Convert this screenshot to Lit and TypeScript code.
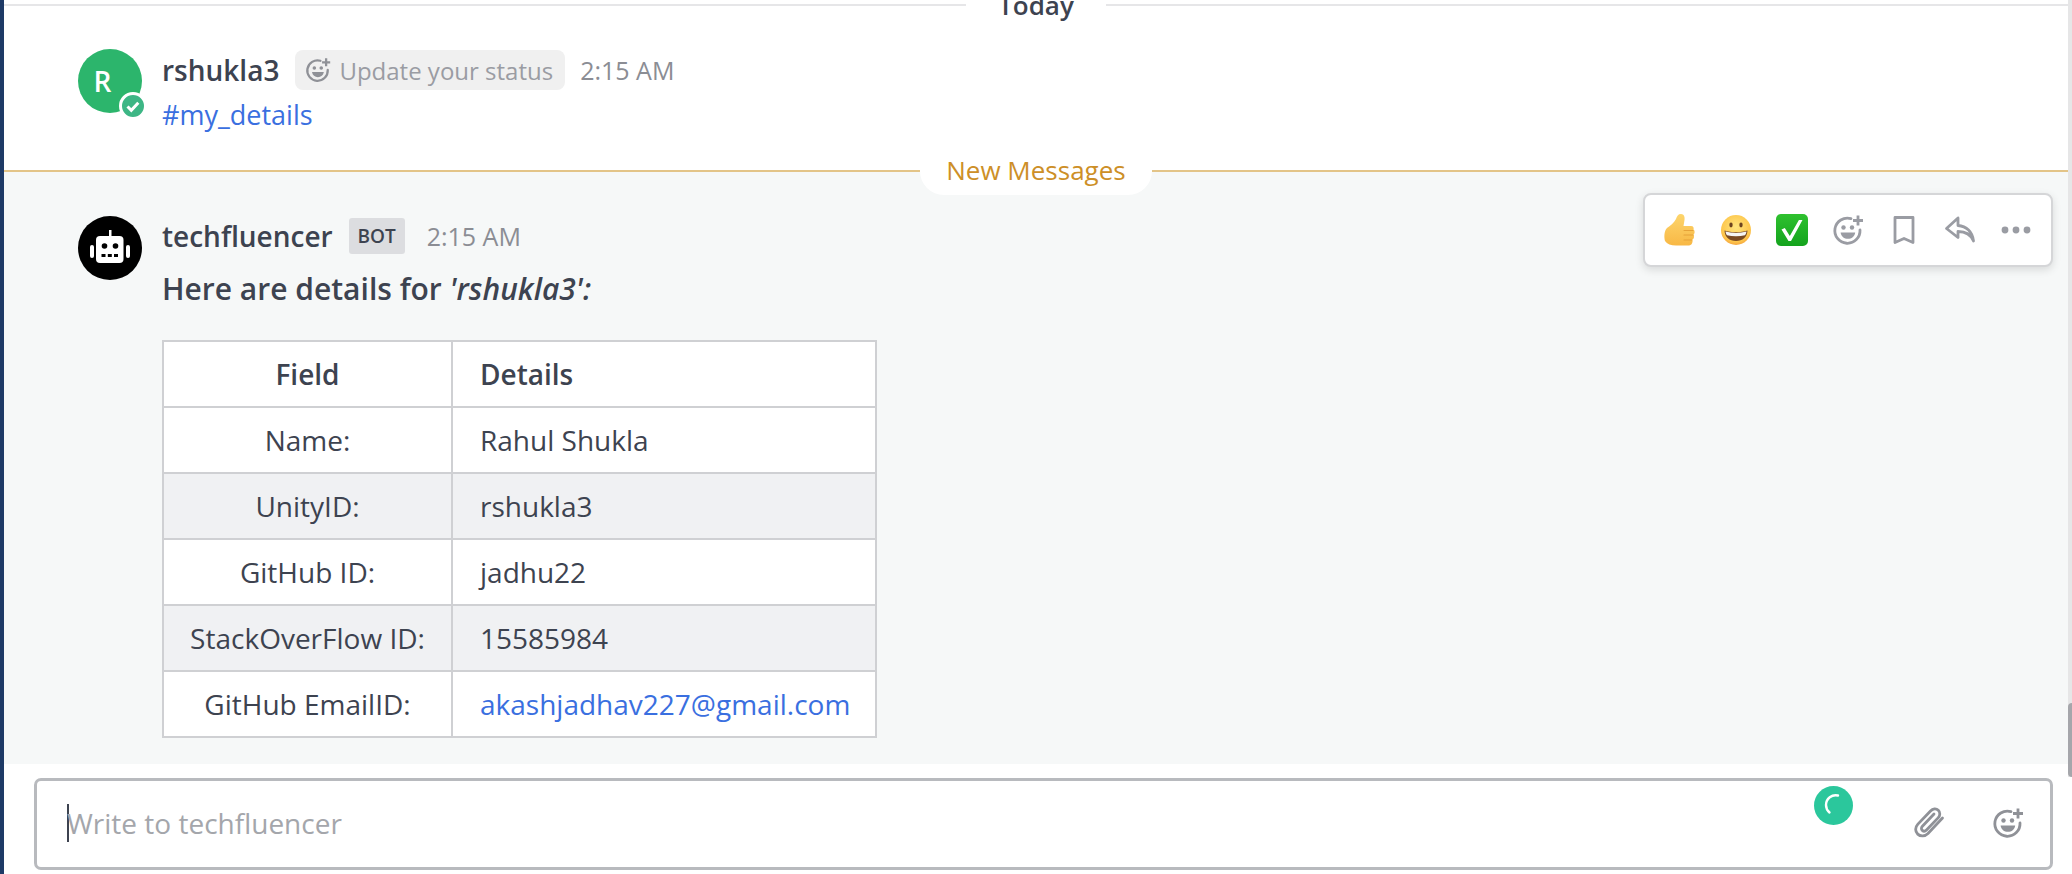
import {LitElement, html, css, svg} from 'lit';
import {customElement} from 'lit/decorators.js';

const rows = [
  ['Name:', 'Rahul Shukla'],
  ['UnityID:', 'rshukla3'],
  ['GitHub ID:', 'jadhu22'],
  ['StackOverFlow ID:', '15585984'],
  ['GitHub EmailID:', 'akashjadhav227@gmail.com'],
];

const smilePlus = (color: string) => html`<svg class="ico" viewBox="0 0 32 32" fill="none">
  <path d="M19 4.600A12.600 12.600 0 1 0 28 16" stroke=${color} stroke-width="2.800" stroke-linecap="round"/>
  <circle cx="11.500" cy="13.500" r="2.200" fill=${color}/>
  <circle cx="20" cy="13.500" r="2.200" fill=${color}/>
  <path d="M8.600 18.400h14.600c-.6 4-3.600 6.400-7.300 6.400s-6.700-2.400-7.300-6.400z" fill=${color}/>
  <path d="M26 1.500v10M21 6.500h10" stroke=${color} stroke-width="2.800"/>
</svg>`;

const thumb = svg`<defs><linearGradient id="th" x1="0" y1="0" x2="0" y2="1"><stop offset="0" stop-color="#fdd56c"/><stop offset="1" stop-color="#f8b845"/></linearGradient></defs>
  <path d="M3 14C6 12 10 9 12 5C13 2 14 0 17 0C20 0 21 3 20.500 6L19.500 12H27C29.500 12 30 14 29.500 15.500C31 16.500 31 19.500 29.500 20.500C30.500 22 30 25 28.500 25.500C29 27.500 28 31.500 25 31.500H12C7 31.500 3 30 1 27C0 23 0 17 3 14Z" fill="url(#th)"/>
  <path d="M20 16.500h9M20 21h9M20 26h7.500" stroke="#e6a238" stroke-width="1.100" stroke-linecap="round"/>`;

const grin = svg`<defs><radialGradient id="gr" cx=".5" cy=".4" r=".65"><stop offset="0" stop-color="#ffe57c"/><stop offset=".75" stop-color="#fdc64c"/><stop offset="1" stop-color="#f29a3a"/></radialGradient></defs>
  <circle cx="16" cy="16" r="15" fill="url(#gr)"/>
  <ellipse cx="11" cy="11" rx="1.700" ry="2.400" fill="#6e4520"/>
  <ellipse cx="21" cy="11" rx="1.700" ry="2.400" fill="#6e4520"/>
  <path d="M4.500 16.500c3.500 1.200 7.500 1.800 11.500 1.800s8-.6 11.500-1.800c-.2 6.500-5 10.500-11.500 10.500s-11.300-4-11.500-10.500z" fill="#7a4a22"/>
  <path d="M5.500 17.500c3.200.9 6.800 1.400 10.500 1.400s7.300-.5 10.500-1.400c-.3 1.700-.8 2.800-1.500 3.700-2.800.7-5.800 1-9 1s-6.200-.3-9-1c-.7-.9-1.200-2-1.500-3.700z" fill="#f5f5f5"/>`;

const checkBox = svg`<defs><linearGradient id="cb" x1="0" y1="0" x2="0" y2="1"><stop offset="0" stop-color="#2fc12f"/><stop offset="1" stop-color="#14a31d"/></linearGradient></defs>
  <rect x="0" y="0" width="32" height="32" rx="5" fill="url(#cb)"/>
  <path d="M5.500 15.500l7 11.500h2.500l11.500-21h-3.600L13.800 22 8.800 14z" fill="#fff"/>`;

@customElement('app-root')
export class AppRoot extends LitElement {
  static styles = css`
    :host {
      display: block;
      width: 2072px;
      height: 874px;
      overflow: hidden;
      background: #fff;
      font-family: "Open Sans", sans-serif;
      color: #3d4350;
      font-size: 28px;
    }
    .layout {
      display: flex;
      height: 874px;
    }
    .rail {
      width: 4px;
      flex: none;
      background: #1e3a66;
    }
    .main {
      flex: 1;
      min-width: 0;
      display: flex;
      flex-direction: column;
    }
    .scroller {
      position: relative;
      height: 764px;
      flex: none;
      padding-right: 4px;
    }
    .track {
      position: absolute;
      top: 0;
      right: 0;
      width: 4px;
      height: 777px;
      background: #e6e6e7;
    }
    .thumb {
      position: absolute;
      bottom: 0;
      left: 0;
      width: 4px;
      height: 74px;
      background: #a5a6ab;
      border-radius: 4px 0 0 4px;
    }
    .sep {
      display: flex;
      align-items: center;
      height: 9px;
    }
    .sep .line {
      flex: 1;
      height: 2px;
      background: #e6e6e8;
    }
    .sep .label {
      padding: 0 32px;
      line-height: 30px;
      font-size: 26px;
      font-weight: 600;
      background: #fff;
    }
    .post {
      display: flex;
      gap: 20px;
      padding: 40px 0 0 74px;
      height: 162px;
      box-sizing: border-box;
    }
    .avatar {
      position: relative;
      width: 64px;
      height: 64px;
      flex: none;
      border-radius: 50%;
      background: #2cb56c;
      color: #fff;
      display: flex;
      align-items: center;
      justify-content: center;
      font-size: 28px;
      font-weight: 600;
      padding-right: 15px;
      box-sizing: border-box;
      line-height: 1;
    }
    .avatar svg.robot {
      position: absolute;
      inset: 0;
      width: 64px;
      height: 64px;
    }
    .badge {
      position: absolute;
      left: 41px;
      top: 43px;
      width: 22px;
      height: 22px;
      border: 3px solid #fff;
      border-radius: 50%;
      background: #3db685;
    }
    .badge svg {
      display: block;
      width: 22px;
      height: 22px;
    }
    .head {
      display: flex;
      align-items: center;
      height: 42px;
    }
    .name {
      font-weight: 600;
    }
    .status {
      display: flex;
      align-items: center;
      gap: 8px;
      height: 40px;
      margin-left: 16px;
      padding: 0 12px 0 10px;
      border-radius: 8px;
      background: #f0f0f0;
      color: #9a9ca3;
      font-size: 24px;
    }
    .status .ico {
      width: 26px;
      height: 26px;
    }
    .time {
      color: #8b8d94;
      font-size: 25px;
      margin-left: 15px;
    }
    a {
      color: #3a6fe0;
      text-decoration: none;
    }
    .channel {
      margin-top: 4px;
      line-height: 40px;
      font-size: 27px;
    }
    .newsep {
      position: relative;
      z-index: 1;
      display: flex;
      align-items: center;
      height: 0;
    }
    .newsep .line {
      flex: 1;
      height: 2px;
      background: #e3c488;
    }
    .newsep .label {
      display: flex;
      align-items: center;
      justify-content: center;
      width: 232px;
      height: 48px;
      padding-bottom: 2px;
      box-sizing: border-box;
      background: #fff;
      border-radius: 24px;
      color: #cd8f27;
      font-size: 26px;
    }
    .post.bot {
      height: 593px;
      padding-top: 45px;
      background: #f6f8f8;
    }
    .post.bot .avatar {
      background: #000;
      padding: 0;
    }
    .post.bot .head {
      height: 40px;
    }
    .bot-tag {
      display: flex;
      align-items: center;
      justify-content: center;
      width: 56px;
      height: 36px;
      margin-left: 16px;
      border-radius: 3px;
      background: #dcdde0;
      font-size: 19px;
      font-weight: 600;
    }
    .post.bot .time {
      margin-left: 22px;
    }
    .lead {
      font-weight: 600;
      font-size: 30px;
      margin: 13px 0 0;
      line-height: 40px;
    }
    table {
      border-collapse: collapse;
      margin-top: 31px;
      width: 715px;
      table-layout: fixed;
      background: #fff;
    }
    th,
    td {
      height: 66px;
      padding: 0;
      border: 2px solid #cfd0d3;
      font-weight: 400;
      box-sizing: border-box;
    }
    th {
      font-weight: 600;
    }
    .c1 {
      width: 289px;
      text-align: center;
    }
    .c2 {
      text-align: left;
      padding-left: 27px;
    }
    tr.odd td {
      background: #f0f1f3;
    }
    .actions {
      position: absolute;
      left: 1639px;
      top: 193px;
      display: flex;
      align-items: center;
      height: 74px;
      padding: 0 7px;
      box-sizing: border-box;
      background: #fff;
      border: 2px solid #d5d6d8;
      border-radius: 8px;
      box-shadow: 0 3px 8px rgba(0, 0, 0, 0.12);
    }
    .act {
      width: 56px;
      height: 56px;
      display: flex;
      align-items: center;
      justify-content: center;
    }
    .act svg {
      width: 32px;
      height: 32px;
    }
    .composer {
      position: relative;
      box-sizing: border-box;
      height: 92px;
      margin: 14px 19px 0 30px;
      padding-left: 30px;
      padding-bottom: 2px;
      display: flex;
      align-items: center;
      border: 3px solid #b8babe;
      border-radius: 7px;
      color: #a4a6ab;
    }
    .caret {
      width: 1.500px;
      height: 38px;
      margin-right: -1.500px;
      background: #3d4350;
    }
    .tools {
      margin-left: auto;
      display: flex;
      align-items: center;
      gap: 47px;
      padding-right: 26px;
    }
    .tools svg {
      display: block;
      width: 32px;
      height: 32px;
    }
    .grammarly {
      position: absolute;
      left: 1777px;
      top: 5px;
      width: 39px;
      height: 39px;
    }
  `;

  render() {
    return html`<div class="layout">
      <div class="rail"></div>
      <div class="main">
        <div class="scroller">
          <div class="sep">
            <div class="line"></div>
            <div class="label">Today</div>
            <div class="line"></div>
          </div>

          <div class="post">
            <div class="avatar">
              R
              <div class="badge">
                <svg viewBox="0 0 22 22" fill="none">
                  <path d="M5.500 11.500l3.800 3.800 7-7.500" stroke="#fff" stroke-width="3"/>
                </svg>
              </div>
            </div>
            <div>
              <div class="head">
                <span class="name">rshukla3</span>
                <span class="status">${smilePlus('#8f9197')}Update your status</span>
                <span class="time">2:15 AM</span>
              </div>
              <div class="channel"><a href="#">#my_details</a></div>
            </div>
          </div>

          <div class="newsep">
            <div class="line"></div>
            <div class="label">New Messages</div>
            <div class="line"></div>
          </div>

          <div class="post bot">
            <div class="avatar">
              <svg class="robot" viewBox="0 0 64 64" fill="#fff">
                <rect x="31" y="14" width="2.500" height="8"/>
                <rect x="18" y="20" width="27.500" height="27" rx="4"/>
                <rect x="12" y="29" width="4" height="13" rx="2"/>
                <rect x="48" y="29" width="4" height="13" rx="2"/>
                <circle cx="26.500" cy="30" r="2.800" fill="#000"/>
                <circle cx="37.500" cy="30" r="2.800" fill="#000"/>
                <rect x="23.500" y="38" width="4" height="3" fill="#000"/>
                <rect x="29.800" y="38" width="4" height="3" fill="#000"/>
                <rect x="36" y="38" width="4" height="3" fill="#000"/>
              </svg>
            </div>
            <div>
              <div class="head">
                <span class="name">techfluencer</span>
                <span class="bot-tag">BOT</span>
                <span class="time">2:15 AM</span>
              </div>
              <p class="lead">Here are details for <em>'rshukla3':</em></p>
              <table>
                <tr><th class="c1">Field</th><th class="c2">Details</th></tr>
                ${rows.map(([field, value], i) => html`<tr class=${i % 2 ? 'odd' : ''}>
                  <td class="c1">${field}</td>
                  <td class="c2">${value.includes('@') ? html`<a href="#">${value}</a>` : value}</td>
                </tr>`)}
              </table>
            </div>
          </div>

          <div class="actions">
            <div class="act"><svg viewBox="0 0 32 32">${thumb}</svg></div>
            <div class="act"><svg viewBox="0 0 32 32">${grin}</svg></div>
            <div class="act"><svg viewBox="0 0 32 32">${checkBox}</svg></div>
            <div class="act">${smilePlus('#9a9ca3')}</div>
            <div class="act">
              <svg viewBox="0 0 32 32" fill="none">
                <path d="M7 3.500h18v25l-9-4-9 4z" stroke="#9a9ca3" stroke-width="2.800" stroke-linejoin="round"/>
              </svg>
            </div>
            <div class="act">
              <svg viewBox="0 0 32 32" fill="none">
                <path d="M14 4L2.500 14.500 14 23.500v-6c7 0 12.500 2 15.500 9.500-1-9-7-15-15.500-15.500z" stroke="#9a9ca3" stroke-width="2.800" stroke-linejoin="round"/>
              </svg>
            </div>
            <div class="act">
              <svg viewBox="0 0 32 32" fill="#9a9ca3">
                <circle cx="5" cy="16" r="3.400"/>
                <circle cx="16" cy="16" r="3.400"/>
                <circle cx="27" cy="16" r="3.400"/>
              </svg>
            </div>
          </div>

          <div class="track"><div class="thumb"></div></div>
        </div>

        <div class="composer">
          <span class="caret"></span>
          <span>Write to techfluencer</span>
          <div class="tools">
            <svg viewBox="0 0 32 32" fill="none">
              <path d="M29.500 11L15 26.500c-3 3-7.500 3.200-10.300.6-2.800-2.600-2.700-6.900.2-10L17.500 4c2.300-2.400 5.700-2.700 7.800-.7 2.100 2 2 5.300-.2 7.600L13.500 23c-1.200 1.300-3 1.500-4.200.4-1.200-1.100-1.100-2.900.1-4.200L21 7" stroke="#8f9197" stroke-width="2.800" stroke-linecap="round"/>
            </svg>
            ${smilePlus('#8f9197')}
          </div>
          <svg class="grammarly" viewBox="0 0 39 39" fill="none">
            <circle cx="19.500" cy="19.500" r="19.500" fill="#2bc79c"/>
            <path d="M24 9.500c-6-1.500-12 3-12 9.500 0 3 1.200 5.500 3.500 7.500" stroke="#fff" stroke-width="2.400" stroke-linecap="round"/>
          </svg>
        </div>
      </div>
    </div>`;
  }
}
